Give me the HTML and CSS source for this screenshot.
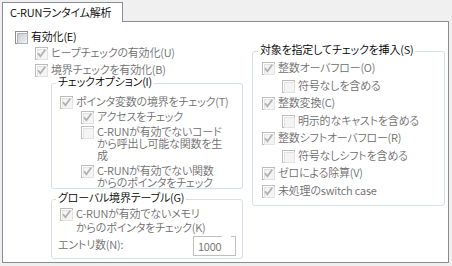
FILE: index.html
```html
<!DOCTYPE html>
<html lang="ja">
<head>
<meta charset="utf-8">
<link rel="stylesheet" href="styles.css">
</head>
<body>
<svg class="defs" aria-hidden="true"><symbol id="chk" viewBox="0 0 13 13"><path d="M3 6.3l2.4 2.9 4.8-6.4" fill="none" stroke="currentColor" stroke-width="1.8"/></symbol></svg>
<div class="tabs"><div class="tab">C-RUNランタイム解析</div></div>
<div class="panel">
  <div class="left">
    <div class="row"><span class="cb en"></span><span class="txt en">有効化(E)</span></div>
    <div class="sub">
      <div class="row"><span class="cb"><svg><use href="#chk"/></svg></span><span class="txt">ヒープチェックの有効化(U)</span></div>
      <div class="row"><span class="cb"><svg><use href="#chk"/></svg></span><span class="txt">境界チェックを有効化(B)</span></div>
      <fieldset class="grp opts">
        <legend>チェックオプション(I)</legend>
        <div class="body">
          <div class="row"><span class="cb"><svg><use href="#chk"/></svg></span><span class="txt">ポインタ変数の境界をチェック(T)</span></div>
          <div class="nest">
            <div class="row"><span class="cb"><svg><use href="#chk"/></svg></span><span class="txt">アクセスをチェック</span></div>
            <div class="row"><span class="cb"></span><span class="txt">C-RUNが有効でないコード<br>から呼出し可能な関数を生<br>成</span></div>
            <div class="row"><span class="cb"><svg><use href="#chk"/></svg></span><span class="txt">C-RUNが有効でない関数<br>からのポインタをチェック</span></div>
          </div>
        </div>
      </fieldset>
      <fieldset class="grp glob">
        <legend>グローバル境界テーブル(G)</legend>
        <div class="body">
          <div class="row"><span class="cb"><svg><use href="#chk"/></svg></span><span class="txt tall">C-RUNが有効でないメモリ<br>からのポインタをチェック(K)</span></div>
          <div class="entry"><span class="elabel">エントリ数(N):</span><span class="num">1000</span></div>
        </div>
      </fieldset>
    </div>
  </div>
  <div class="right">
    <fieldset class="grp tgt">
      <legend>対象を指定してチェックを挿入(S)</legend>
      <div class="body">
        <div class="row"><span class="cb"><svg><use href="#chk"/></svg></span><span class="txt">整数オーバフロー(O)</span></div>
        <div class="row ind"><span class="cb"></span><span class="txt">符号なしを含める</span></div>
        <div class="row"><span class="cb"><svg><use href="#chk"/></svg></span><span class="txt">整数変換(C)</span></div>
        <div class="row ind"><span class="cb"></span><span class="txt">明示的なキャストを含める</span></div>
        <div class="row"><span class="cb"><svg><use href="#chk"/></svg></span><span class="txt">整数シフトオーバフロー(R)</span></div>
        <div class="row ind"><span class="cb"></span><span class="txt">符号なしシフトを含める</span></div>
        <div class="row"><span class="cb"><svg><use href="#chk"/></svg></span><span class="txt">ゼロによる除算(V)</span></div>
        <div class="row"><span class="cb"><svg><use href="#chk"/></svg></span><span class="txt">未処理のswitch case</span></div>
      </div>
    </fieldset>
  </div>
</div>
</body>
</html>
```
FILE: styles.css
```css
* { box-sizing: border-box; }
html, body { margin: 0; }
body {
  background: #f0f0f0;
  font-family: "Noto Sans CJK JP", "Noto Sans", sans-serif;
  font-size: 11px;
  font-weight: 350;
  letter-spacing: -0.2px;
  font-feature-settings: "palt";
  color: #6d6d6d;
  width: 452px;
  height: 266px;
  overflow: hidden;
}
.defs { position: absolute; width: 0; height: 0; }

.tabs { display: flex; padding: 2px 0 0 2px; }
.tab {
  width: 121px;
  height: 20px;
  border: 1px solid #898c95;
  border-bottom: none;
  background: #fff;
  color: #000;
  padding-left: 7px;
  line-height: 18px;
  position: relative;
  z-index: 1;
  margin-bottom: -1px;
  white-space: nowrap;
}
.panel {
  margin-left: 2px;
  width: 447px;
  height: 242px;
  border: 1px solid #898c95;
  background: #fff;
  display: flex;
}
.left {
  width: 246px;
  padding: 9px 0 0 12px;
  display: flex;
  flex-direction: column;
}
.right { padding: 21px 0 0 3px; }

.row { display: flex; align-items: flex-start; }
.cb {
  flex: none;
  position: relative;
  width: 13px;
  height: 13px;
  border: 1px solid #bcbcbc;
  background: #fff;
  padding: 1px;
  color: #b0b0b0;
}
.cb::before {
  content: "";
  display: block;
  width: 9px;
  height: 9px;
  border: 1px solid #e2e2e2;
  background: #f4f4f4;
}
.cb.en { border-color: #8e8f8f; }
.cb.en::before {
  border-color: #aeb3b9;
  background: linear-gradient(135deg, #c8ccd2, #f2f2f2);
}
.cb svg { position: absolute; left: -1px; top: -1px; width: 13px; height: 13px; }
.txt { margin: -1px 0 0 3px; line-height: 12px; white-space: nowrap; }
.txt.tall { line-height: 14px; margin-top: -2px; }
.en { color: #000; }

.sub { margin: 3px 0 0 20px; display: flex; flex-direction: column; }
.sub > .row + .row { margin-top: 4px; }

.grp {
  margin: 0;
  padding: 0;
  min-width: 0;
  border: 1px solid #d5dfe5;
  border-radius: 3px;
}
.grp legend {
  color: #000;
  line-height: 12px;
  padding: 0 2px 5px;
  margin-left: 4px;
  white-space: nowrap;
}
.opts { width: 192px; margin: -2px 0 0 16px; }
.opts .body { padding: 4px 0 0 8px; }
.nest { margin-left: 21px; }
.nest .row { margin-top: 2px; }
.nest .row + .row + .row { margin-top: 4px; }

.glob { width: 192px; margin: 2px 0 0 16px; }
.glob .body { padding: 0 6px 2px 8px; }
.entry { display: flex; justify-content: space-between; align-items: flex-start; margin-top: 2px; }
.elabel { margin: 2px 0 0 -2px; line-height: 12px; }
.num {
  position: relative;
  width: 43px;
  height: 20px;
  border: 1px solid #bfbfbf;
  padding-left: 4px;
  line-height: 18px;
}
.num::after {
  content: "";
  position: absolute;
  top: -1px;
  left: 28px;
  width: 9px;
  height: 1px;
  background: #fff;
}

.tgt { width: 193px; }
.tgt legend { margin-left: 5px; }
.tgt .body { padding: 2px 0 7px 9px; }
.tgt .row + .row { margin-top: 4.5px; }
.tgt .row.ind { margin-left: 20px; }
```
